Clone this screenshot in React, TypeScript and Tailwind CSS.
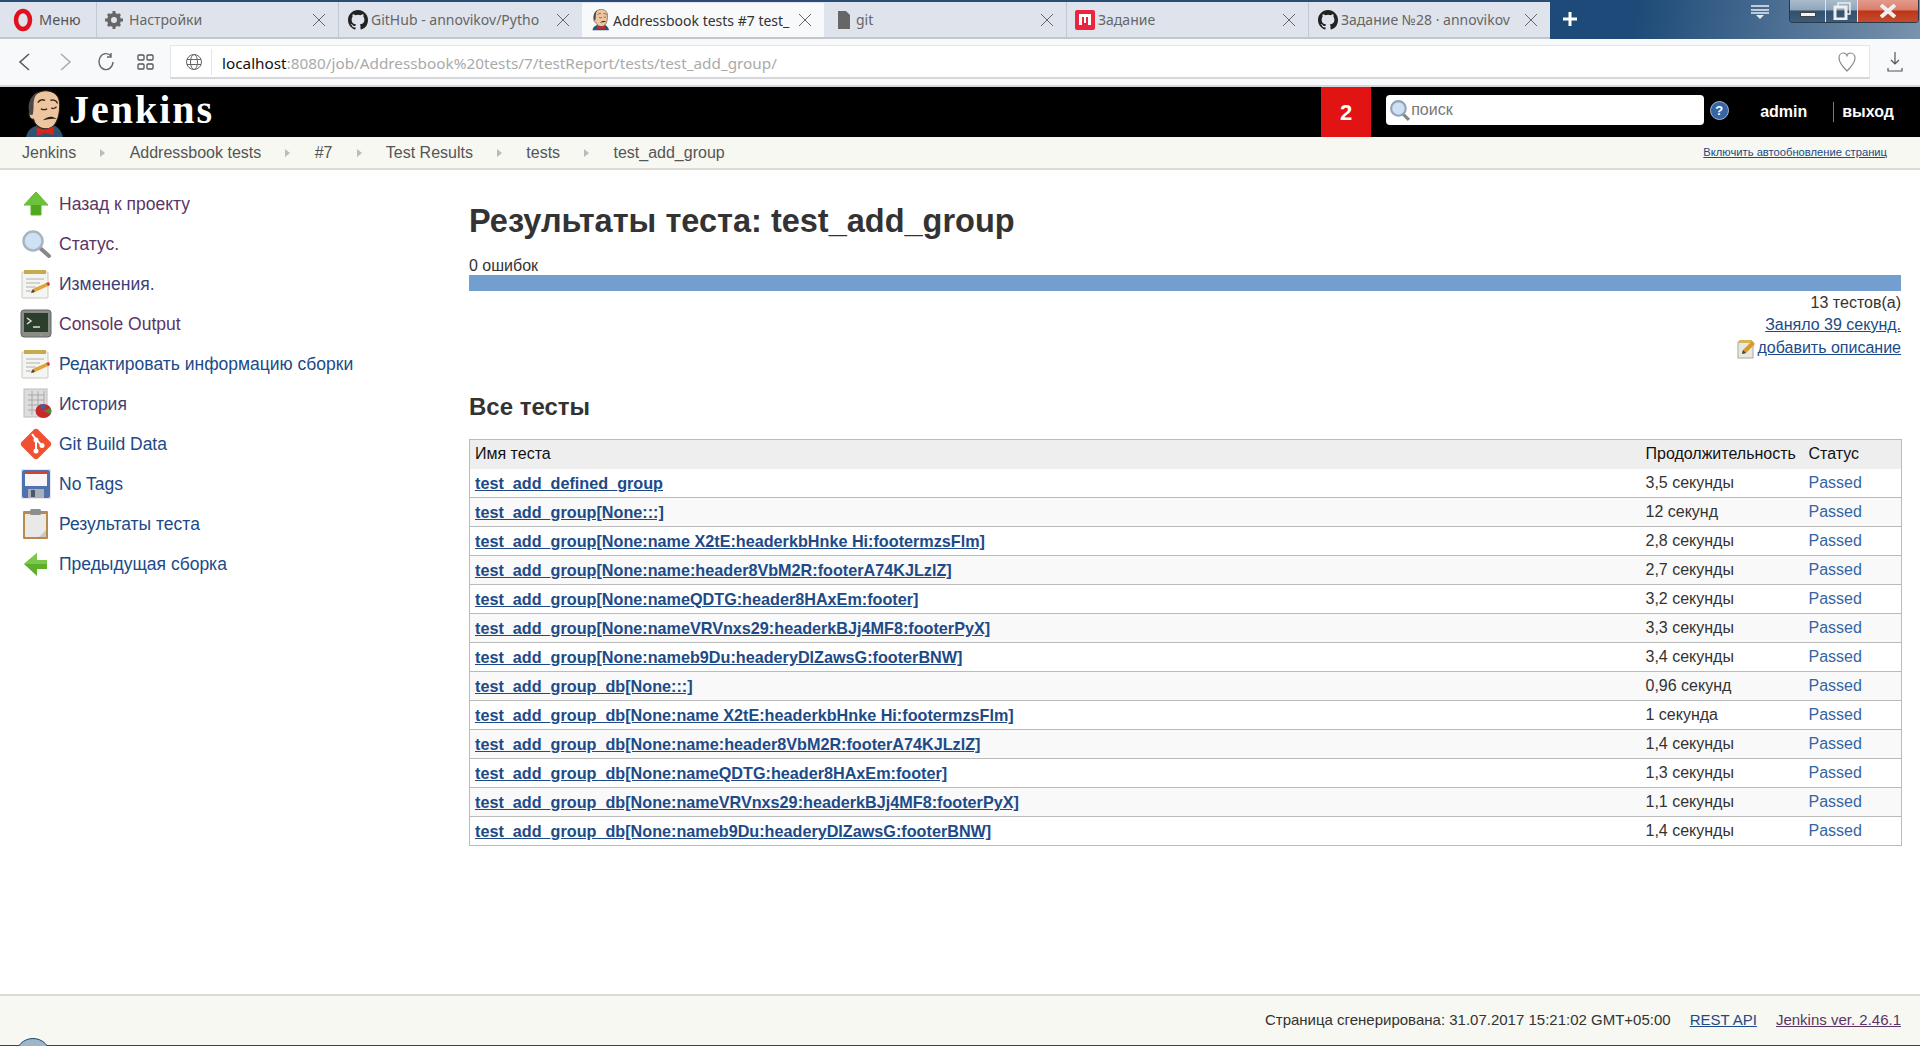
const tests = [
  ["test_add_defined_group", "3,5 секунды"],
  ["test_add_group[None:::]", "12 секунд"],
  ["test_add_group[None:name X2tE:headerkbHnke Hi:footermzsFlm]", "2,8 секунды"],
  ["test_add_group[None:name:header8VbM2R:footerA74KJLzlZ]", "2,7 секунды"],
  ["test_add_group[None:nameQDTG:header8HAxEm:footer]", "3,2 секунды"],
  ["test_add_group[None:nameVRVnxs29:headerkBJj4MF8:footerPyX]", "3,3 секунды"],
  ["test_add_group[None:nameb9Du:headeryDlZawsG:footerBNW]", "3,4 секунды"],
  ["test_add_group_db[None:::]", "0,96 секунд"],
  ["test_add_group_db[None:name X2tE:headerkbHnke Hi:footermzsFlm]", "1 секунда"],
  ["test_add_group_db[None:name:header8VbM2R:footerA74KJLzlZ]", "1,4 секунды"],
  ["test_add_group_db[None:nameQDTG:header8HAxEm:footer]", "1,3 секунды"],
  ["test_add_group_db[None:nameVRVnxs29:headerkBJj4MF8:footerPyX]", "1,1 секунды"],
  ["test_add_group_db[None:nameb9Du:headeryDlZawsG:footerBNW]", "1,4 секунды"],
];

const Butler = ({ size = 40 }: { size?: number }) => (
  <svg width={size} height={size * 1.12} viewBox="0 0 40 45" className="shrink-0">
    <path d="M3 45c1-7 6-10 11-11l16 0c4 2 7 6 8 11z" fill="#2f5373" />
    <path d="M8 11C10 3 17 0 24 1c7 1 11 6 11 13 0 6-1 12-3 16-2 5-7 8-12 7-6-1-9-5-10-9-3 0-5-3-4-7 0-3 1-6 2-10z" fill="#edc6a0" stroke="#2b201a" strokeWidth="1" />
    <path d="M7 24C3 16 6 6 14 2c-3 4-4 8-4 12 0 3 0 7-1 10z" fill="#4c4a48" />
    <path d="M14 12c2-3 5-3 7-2M26 10c3-1 6 0 7 3M17 18c2 1 4 1 6 0M27 17c1 1 3 1 5-1" stroke="#3a2a20" strokeWidth="1.3" fill="none" />
    <path d="M19 29c3-3 7-4 10-3 1 0 2 1 3 2-4-1-8 0-13 1z" fill="#2b201a" />
    <path d="M13 36l8 2 8-3v8l-8-2-8 3z" fill="#d8261c" />
  </svg>
);

const GitHubIcon = () => (
  <svg width="20" height="20" viewBox="0 0 16 16" fill="#222" className="shrink-0 ml-[5px]">
    <path d="M8 0C3.58 0 0 3.58 0 8c0 3.54 2.29 6.53 5.47 7.59.4.07.55-.17.55-.38v-1.34c-2.23.48-2.7-1.07-2.7-1.07-.36-.92-.89-1.17-.89-1.17-.73-.5.05-.49.05-.49.8.06 1.23.83 1.23.83.71 1.23 1.87.87 2.33.66.07-.52.28-.87.51-1.07-1.78-.2-3.64-.89-3.64-3.95 0-.87.31-1.59.82-2.15-.08-.2-.36-1.02.08-2.12 0 0 .67-.21 2.2.82a7.6 7.6 0 0 1 4 0c1.53-1.04 2.2-.82 2.2-.82.44 1.1.16 1.92.08 2.12.51.56.82 1.27.82 2.15 0 3.07-1.87 3.75-3.65 3.95.29.25.54.73.54 1.48v2.2c0 .21.15.46.55.38A8 8 0 0 0 16 8c0-4.42-3.58-8-8-8z" />
  </svg>
);

const CloseX = () => (
  <svg width="14" height="14" viewBox="0 0 14 14" className="shrink-0 ml-auto">
    <path d="M1 1l12 12M13 1L1 13" stroke="#666" strokeWidth="1" fill="none" />
  </svg>
);

const Tab = ({ icon, title, width, active }: { icon: React.ReactNode; title: string; width: string; active?: boolean }) => (
  <div className={`${width} flex h-full items-center gap-[3px] pl-[4px] pr-[12px] ${active ? "bg-[#f8f9fb] border-t border-[#dfe4ec]" : "border-l border-[#c3c9d2]"}`}>
    {icon}
    <span className={`whitespace-nowrap text-[14px] ${active ? "text-[#333]" : "text-[#666]"}`}>{title}</span>
    <CloseX />
  </div>
);

const TabBar = () => (
  <div className="h-[39px] flex items-stretch bg-[#1d4a78] bg-[linear-gradient(100deg,#1d4a78_0%,#1d4a78_85%,#7a93ad_100%)] font-['Noto_Sans',sans-serif] shrink-0">
    <div className="flex items-stretch w-[1550px] bg-[#dfe4ec] border-t-2 border-[#2a4d78] border-b-2 border-b-[#c3c7cc] shrink-0">
      <div className="w-[96px] flex items-center pl-[13px] gap-[6px]">
        <svg width="20" height="24" viewBox="0 0 20 24"><ellipse cx="10" cy="12" rx="7" ry="9" fill="none" stroke="#e0101e" strokeWidth="4.5" /></svg>
        <span className="text-[14.5px] text-[#555]">Меню</span>
      </div>
      <Tab
        width="w-[242px]"
        title="Настройки"
        icon={
          <svg width="20" height="20" viewBox="0 0 20 20" className="ml-[3px] mr-[2px] shrink-0">
            <circle cx="10" cy="10" r="5" fill="none" stroke="#666" strokeWidth="4" />
            <path d="M10 1v4M10 15v4M1 10h4M15 10h4M4 4l3 3M13 13l3 3M16 4l-3 3M7 13l-3 3" stroke="#666" strokeWidth="3" />
          </svg>
        }
      />
      <Tab width="w-[244px]" title="GitHub - annovikov/Pytho" icon={<GitHubIcon />} />
      <Tab width="w-[242px]" active title="Addressbook tests #7 test_" icon={<span className="ml-[5px] shrink-0"><Butler size={19} /></span>} />
      <div className="w-[242px] flex h-full items-center gap-[5px] pl-[13px] pr-[12px]">
        <svg width="14" height="18" viewBox="0 0 14 18"><path d="M1 0h8l4 4v14H1z" fill="#666" /></svg>
        <span className="text-[14px] text-[#666]">git</span>
        <CloseX />
      </div>
      <Tab
        width="w-[242px]"
        title="Задание"
        icon={
          <span className="w-[20px] h-[20px] ml-[4px] shrink-0 bg-[#e8263f] rounded-[2px] flex items-start justify-center pt-[3px]">
            <svg width="14" height="12" viewBox="0 0 14 12"><path d="M1 12V1h12v11h-3V4H8v6H6V4H4v8z" fill="#fff" /></svg>
          </span>
        }
      />
      <Tab width="w-[242px]" title="Задание №28 · annovikov" icon={<GitHubIcon />} />
    </div>
    <div className="w-[40px] flex items-center justify-center pb-[1px] shrink-0">
      <svg width="14" height="14" viewBox="0 0 14 14"><path d="M7 0v14M0 7h14" stroke="#fff" strokeWidth="3" /></svg>
    </div>
    <div className="flex-1 flex items-start justify-end">
      <svg width="20" height="16" viewBox="0 0 20 16" className="mt-[5px] mr-[19px]">
        <path d="M1 1h18M1 5h18M1 8h18" stroke="#e8edf2" strokeWidth="1.6" />
        <path d="M6 10h8l-4 4z" fill="#e8edf2" />
      </svg>
      <div className="w-[130px] h-[23px] flex border border-[#2c3a48] border-t-0 rounded-b-[4px] mr-[1px] overflow-hidden">
        <div className="w-[36px] flex items-center justify-center bg-[linear-gradient(#a9bccd_0%,#8fa5ba_45%,#32506f_50%,#3c5c7c_100%)] border-r border-[#dde5ec]">
          <span className="w-[16px] h-[5px] mt-[6px] bg-[#f2f2f2] border border-[#444]" />
        </div>
        <div className="w-[32px] flex items-center justify-center bg-[linear-gradient(#a9bccd_0%,#8fa5ba_45%,#32506f_50%,#3c5c7c_100%)] border-r border-[#dde5ec]">
          <svg width="18" height="18" viewBox="0 0 18 18">
            <path d="M5 4V1h12v11h-3" fill="none" stroke="#eee" strokeWidth="1.5" />
            <path d="M2 5h11v12H2z" fill="none" stroke="#eee" strokeWidth="3" />
          </svg>
        </div>
        <div className="flex-1 flex items-center justify-center bg-[linear-gradient(#e59a8c_0%,#d87f6c_45%,#bf3418_50%,#c64a30_100%)]">
          <svg width="20" height="14" viewBox="0 0 20 14"><path d="M3 1l14 12M17 1L3 13" stroke="#eee" strokeWidth="4" /></svg>
        </div>
      </div>
    </div>
  </div>
);

const AddressBar = () => (
  <div className="h-[48px] flex items-center bg-[#f8f9fb] border-b-2 border-[#d5d7da] font-['Noto_Sans',sans-serif] shrink-0">
    <div className="w-[170px] flex items-center pl-[17px] shrink-0">
      <svg width="14" height="20" viewBox="0 0 14 20" className="mr-[28px]"><path d="M12 2L3 10l9 8" fill="none" stroke="#555" strokeWidth="1.5" /></svg>
      <svg width="14" height="20" viewBox="0 0 14 20" className="mr-[24px]"><path d="M2 2l9 8-9 8" fill="none" stroke="#aaa" strokeWidth="1.5" /></svg>
      <svg width="18" height="20" viewBox="0 0 18 20" className="mr-[22px]"><path d="M14 4a7 8 0 1 0 2 6M14 1v4h-4" fill="none" stroke="#666" strokeWidth="1.4" /></svg>
      <svg width="18" height="18" viewBox="0 0 18 18" fill="none" stroke="#555" strokeWidth="1.3">
        <rect x="1" y="2" width="6" height="5" rx="1" /><rect x="10" y="2" width="6" height="5" rx="1" />
        <rect x="1" y="11" width="6" height="5" rx="1" /><rect x="10" y="11" width="6" height="5" rx="1" />
      </svg>
    </div>
    <div className="w-[1700px] h-[34px] flex items-center bg-white border border-[#e4e6e8] border-b-2 border-b-[#d5d7da] shrink-0">
      <svg width="18" height="18" viewBox="0 0 18 18" fill="none" stroke="#666" strokeWidth="1" className="ml-[14px] shrink-0">
        <circle cx="9" cy="9" r="7.5" /><ellipse cx="9" cy="9" rx="3.5" ry="7.5" /><path d="M2 6.5h14M2 11.5h14" />
      </svg>
      <span className="w-px h-[26px] bg-[#e2e4e6] ml-[8px] mr-[10px]" />
      <span className="text-[15.3px] text-[#111] pt-[3px]">localhost<span className="text-[#aaa]">:8080/job/Addressbook%20tests/7/testReport/tests/test_add_group/</span></span>
      <svg width="20" height="22" viewBox="0 0 20 22" className="ml-auto mr-[12px]">
        <path d="M10 20C5 15 2 11 2 7c0-3 2-5 4.500-5 1.500 0 3 1 3.500 2.500C10.500 3 12 2 13.500 2 16 2 18 4 18 7c0 4-3 8-8 13z" fill="none" stroke="#888" strokeWidth="1.2" />
      </svg>
    </div>
    <div className="flex-1 flex justify-center">
      <svg width="16" height="22" viewBox="0 0 16 22" fill="none" stroke="#555" strokeWidth="1.2"><path d="M8 1v12M4 9l4 4 4-4M1 17v3h14v-3" /></svg>
    </div>
  </div>
);

const Header = () => (
  <div className="h-[50px] flex items-stretch bg-black font-['Liberation_Sans',sans-serif] shrink-0">
    <div className="flex items-end pl-[23px] w-[69px] shrink-0 overflow-hidden">
      <Butler size={42} />
    </div>
    <div className="font-['Liberation_Serif',serif] font-bold text-[40px] leading-[46px] text-white tracking-[2px]">Jenkins</div>
    <div className="ml-auto w-[50px] bg-[#e21313] flex items-center justify-center text-white font-bold text-[22px]">2</div>
    <div className="w-[15px]" />
    <div className="w-[318px] h-[30px] mt-[8px] bg-white rounded-[4px] flex items-center pl-[3px]">
      <svg width="22" height="23" viewBox="0 0 21 22" className="shrink-0">
        <path d="M13 14l6 6" stroke="#888" strokeWidth="3" />
        <circle cx="9" cy="9" r="7" fill="#cfe0f2" stroke="#8ea4bb" strokeWidth="2" />
      </svg>
      <span className="text-[16px] text-[#777]">поиск</span>
    </div>
    <div className="w-[28px] flex items-center justify-center pl-[2px] pb-[3px]">
      <span className="w-[19px] h-[19px] rounded-full bg-[#3465a4] border border-[#9db8d8] text-white font-bold text-[13px] leading-[17px] text-center">?</span>
    </div>
    <div className="w-[28px]" />
    <div className="font-bold text-[16px] text-white leading-[50px]">admin</div>
    <div className="w-[26px]" />
    <div className="h-[20px] mt-[15px] border-l border-[#5a7ec0] pl-[8px] font-bold text-[16px] text-white leading-[20px]">выход</div>
    <div className="w-[26px]" />
  </div>
);

const crumbs = ["Jenkins", "Addressbook tests", "#7", "Test Results", "tests", "test_add_group"];

const Breadcrumbs = () => (
  <div className="h-[33px] flex items-center bg-[#f6f8f1] border-b-2 border-[#dcdcd4] pl-[22px] pr-[33px] text-[16px] text-[#555] font-['Liberation_Sans',sans-serif] shrink-0">
    {crumbs.map((c, i) => (
      <div key={c} className="flex items-center">
        <span>{c}</span>
        {i < crumbs.length - 1 && (
          <span className="mx-[24.2px] w-0 h-0 border-y-[4px] border-y-transparent border-l-[5px] border-l-[#bbb]" />
        )}
      </div>
    ))}
    <a className="ml-auto text-[11.2px] text-[#204a87] underline">Включить автообновление страниц</a>
  </div>
);

const IconUp = () => (
  <svg width="32" height="32" viewBox="0 0 32 32"><path d="M16 4L4 17h7v10h10V17h7z" fill="#4ea71c" stroke="#5ab52a" /><path d="M16 4L4 17h24z" fill="#6cc23a" /></svg>
);
const IconSearch = () => (
  <svg width="32" height="32" viewBox="0 0 32 32">
    <path d="M20 20l9 8" stroke="#888" strokeWidth="4" strokeLinecap="round" />
    <circle cx="13" cy="13" r="9.500" fill="#cfe1f5" stroke="#aab4be" strokeWidth="2.500" />
  </svg>
);
const IconNotepad = () => (
  <svg width="32" height="32" viewBox="0 0 32 32">
    <rect x="2" y="4" width="26" height="26" rx="1" fill="#f4f4f0" stroke="#c8c8c4" />
    <rect x="4" y="2" width="22" height="4" fill="#c9a94e" />
    <path d="M6 11h18M6 15h14M6 19h10M6 23h8" stroke="#b0b0b0" strokeWidth="1.200" />
    <path d="M11 25l2-4 13-6 2 3-13 6z" fill="#e2a33a" />
    <path d="M26 15l3-1 1 3-2 1z" fill="#cc3b2a" />
    <path d="M11 25l2-4 2 3z" fill="#444" />
  </svg>
);
const IconConsole = () => (
  <svg width="32" height="32" viewBox="0 0 32 32">
    <rect x="1" y="2" width="30" height="27" rx="3" fill="#8a8d87" stroke="#666" />
    <rect x="4" y="5" width="24" height="19" fill="#2c3f2c" />
    <path d="M7 10l4 3-4 3" fill="none" stroke="#ddd" strokeWidth="1.500" />
    <path d="M13 19h7" stroke="#ddd" strokeWidth="1.500" />
    <circle cx="21" cy="27" r="0.800" fill="#7ed13a" />
  </svg>
);
const IconHistory = () => (
  <svg width="32" height="32" viewBox="0 0 32 32">
    <rect x="4" y="1" width="23" height="28" fill="#ddd" stroke="#bbb" />
    <path d="M8 7h16M8 12h16M8 17h16M8 22h12M12 3v24M18 3v18M24 3v14" stroke="#a8a8a8" />
    <ellipse cx="23.500" cy="23" rx="8" ry="7" fill="#c9272c" />
    <path d="M23.500 23l7-3c1 2 1 4 0 6z" fill="#4d8c3b" />
    <path d="M23.500 23l-4-6c2-1 4-1 6 0z" fill="#3465a4" />
  </svg>
);
const IconGit = () => (
  <svg width="32" height="32" viewBox="0 0 32 32">
    <path d="M14 1.500L1.500 14c-1 1-1 3 0 4l12.500 12.500c1 1 3 1 4 0L30.500 18c1-1 1-3 0-4L18 1.500c-1-1-3-1-4 0z" fill="#f05133" />
    <path d="M12 6l4 5.500V23M16 11.500l6 6" stroke="#fff" strokeWidth="2" fill="none" />
    <circle cx="16" cy="12" r="2.500" fill="#fff" /><circle cx="16" cy="23" r="2.500" fill="#fff" /><circle cx="22" cy="17.500" r="2.500" fill="#fff" />
  </svg>
);
const IconSave = () => (
  <svg width="32" height="32" viewBox="0 0 32 32">
    <rect x="1" y="1" width="30" height="30" fill="#e8e8e8" />
    <rect x="2" y="2" width="28" height="28" rx="2" fill="#4d72ad" />
    <rect x="5" y="3" width="22" height="15" fill="#f6f6f6" />
    <rect x="5" y="3" width="22" height="3" fill="#d8402c" />
    <rect x="8" y="21" width="16" height="9" fill="#a9b0b8" />
    <rect x="11" y="22" width="4" height="7" fill="#48576b" />
  </svg>
);
const IconClipboard = () => (
  <svg width="32" height="32" viewBox="0 0 32 32">
    <rect x="3" y="3" width="25" height="28" fill="#b98a4e" rx="1" />
    <rect x="5" y="6" width="21" height="23" fill="#e9e9e7" />
    <path d="M19 29l7-7v7z" fill="#c8c8c6" />
    <rect x="10" y="1" width="11" height="6" rx="1.500" fill="#8d8f8d" />
  </svg>
);
const IconBack = () => (
  <svg width="32" height="32" viewBox="0 0 32 32">
    <path d="M4 16L17 5v7h10v9H17v7z" fill="#5cae2b" />
    <path d="M4 16L17 5v7h10v4z" fill="#79c84a" />
  </svg>
);

const navItems: [React.ReactNode, string, string][] = [
  [<IconUp />, "Назад к проекту", "text-[#5c3566]"],
  [<IconSearch />, "Статус.", "text-[#5c3566]"],
  [<IconNotepad />, "Изменения.", "text-[#3e3f76]"],
  [<IconConsole />, "Console Output", "text-[#5c3566]"],
  [<IconNotepad />, "Редактировать информацию сборки", "text-[#204a87]"],
  [<IconHistory />, "История", "text-[#3e3f76]"],
  [<IconGit />, "Git Build Data", "text-[#204a87]"],
  [<IconSave />, "No Tags", "text-[#204a87]"],
  [<IconClipboard />, "Результаты теста", "text-[#204a87]"],
  [<IconBack />, "Предыдущая сборка", "text-[#204a87]"],
];

const Sidebar = () => (
  <div className="w-[469px] pt-[14px] pl-[20px] shrink-0 flex flex-col">
    {navItems.map(([icon, label, color]) => (
      <div key={label} className="h-[40px] flex items-center gap-[7px]">
        <span className="w-[32px] h-[32px] shrink-0">{icon}</span>
        <a className={`text-[17.5px] ${color}`}>{label}</a>
      </div>
    ))}
  </div>
);

const ResultsTable = () => (
  <table className="w-[1432px] border-collapse table-fixed text-[16px] border-l border-r border-b border-[#bbb]">
    <colgroup>
      <col className="w-[1171px]" />
      <col className="w-[163px]" />
      <col className="w-[98px]" />
    </colgroup>
    <thead>
      <tr className="h-[29px] bg-[#eee] border-t border-[#bbb] text-left text-[#111]">
        <th className="font-normal pl-[5px]">Имя теста</th>
        <th className="font-normal pl-[5px]">Продолжительность</th>
        <th className="font-normal pl-[5px]">Статус</th>
      </tr>
    </thead>
    <tbody>
      {tests.map(([name, dur], i) => (
        <tr key={name} className={`h-[29px] ${i > 0 ? "border-t border-[#bbb]" : ""} ${i % 2 ? "bg-[#f9f9f9]" : "bg-white"}`}>
          <td className="pl-[5px] font-bold text-[16.2px] text-[#204a87] underline whitespace-nowrap">{name}</td>
          <td className="pl-[5px] text-[#333]">{dur}</td>
          <td className="pl-[5px] text-[#3465a4]">Passed</td>
        </tr>
      ))}
    </tbody>
  </table>
);

const Main = () => (
  <div className="w-[1432px] pt-[26px] text-[#333]">
    <h1 className="text-[32.5px] font-bold leading-[50px] m-0">Результаты теста: test_add_group</h1>
    <div className="mt-[10px] text-[16px] leading-[19px]">0 ошибок</div>
    <div className="h-[16px] bg-[#729fcf]" />
    <div className="pt-[1px] flex flex-col items-end text-[16px] leading-[22px]">
      <div>13 тестов(а)</div>
      <a className="text-[#204a87] underline">Заняло 39 секунд.</a>
      <div className="flex items-center">
        <svg width="20" height="20" viewBox="0 0 20 20" className="mt-[3px]">
          <rect x="1" y="3" width="15" height="16" fill="#e8e8e2" stroke="#a8a89c" />
          <rect x="2" y="1" width="13" height="3" fill="#d6b656" />
          <path d="M5 15l1-4 9-9 3 3-9 9z" fill="#d69a2d" />
          <path d="M5 15l1-4 3 3z" fill="#444" />
        </svg>
        <a className="text-[#204a87] underline">добавить описание</a>
      </div>
    </div>
    <h2 className="text-[24px] font-bold leading-[30px] mt-[33px] mb-[17px]">Все тесты</h2>
    <ResultsTable />
  </div>
);

const Footer = () => (
  <div className="h-[52px] relative bg-[#f6f8f1] border-t-2 border-[#dcdcd4] border-b border-b-[#1c4a70] flex items-center justify-end pr-[19px] pb-[1px] gap-[19px] text-[15px] text-[#333] shrink-0">
    <span>Страница сгенерирована: 31.07.2017 15:21:02 GMT+05:00</span>
    <a className="text-[#204a87] underline">REST API</a>
    <a className="text-[#5c3566] underline">Jenkins ver. 2.46.1</a>
    <span className="absolute left-[15px] top-[42px] w-[36px] h-[9px] overflow-hidden">
      <span className="block w-[36px] h-[36px] rounded-full bg-[#9fb6c8] border border-[#1c4a70]" />
    </span>
  </div>
);

export default function App() {
  return (
    <div className="h-[1046px] w-[1920px] flex flex-col overflow-hidden bg-white font-['Liberation_Sans',Arial,sans-serif]">
      <TabBar />
      <AddressBar />
      <Header />
      <Breadcrumbs />
      <div className="flex flex-1 min-h-0">
        <Sidebar />
        <Main />
      </div>
      <Footer />
    </div>
  );
}
